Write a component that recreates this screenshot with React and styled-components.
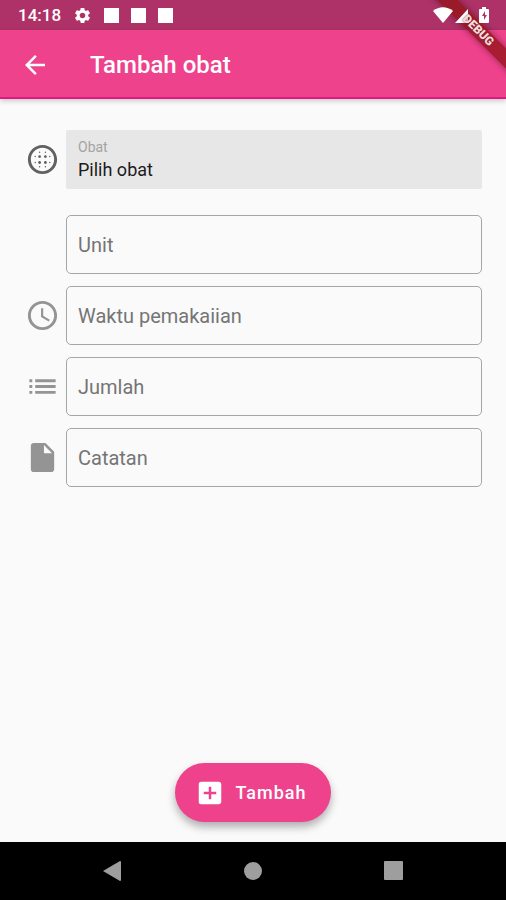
import styled, { createGlobalStyle } from 'styled-components';
import { useState } from 'react';
import {
  MdAccessTime,
  MdAddBox,
  MdArrowBack,
  MdBlurCircular,
  MdInsertDriveFile,
  MdList,
  MdSettings,
} from 'react-icons/md';

const fields = [
  { name: 'unit', label: 'Unit', icon: null },
  { name: 'waktu', label: 'Waktu pemakaiian', icon: MdAccessTime },
  { name: 'jumlah', label: 'Jumlah', icon: MdList },
  { name: 'catatan', label: 'Catatan', icon: MdInsertDriveFile },
];

const StatusBar = () => (
  <StatusContainer>
    <StatusGroup>
      <Clock>14:18</Clock>
      <MdSettings size={19} />
      <Notification />
      <Notification />
      <Notification />
    </StatusGroup>
    <StatusIcons>
      <svg width="20" height="16" viewBox="0 0 20 16">
        <path d="M0 4C6-1 14-1 20 4L10 16Z" fill="#fff" />
      </svg>
      <svg width="16" height="16" viewBox="0 0 16 16">
        <path d="M0 16L13 2V16Z" fill="#fff" />
      </svg>
      <svg width="10" height="16" viewBox="0 0 10 16">
        <path d="M3 0H7V2H9Q10 2 10 3V15Q10 16 9 16H1Q0 16 0 15V3Q0 2 1 2H3Z" fill="#fff" />
        <path d="M6 4L3 9H5V13L8 8H6Z" fill="#ae3267" />
      </svg>
    </StatusIcons>
  </StatusContainer>
);

const Field = ({ name, label, icon: Icon }) => {
  const [value, setValue] = useState('');

  return (
    <Row>
      <IconSlot>{Icon && <Icon size={35} />}</IconSlot>
      <Outlined>
        {value === '' && <FieldLabel htmlFor={name}>{label}</FieldLabel>}
        <FieldInput
          id={name}
          aria-label={label}
          value={value}
          onChange={e => setValue(e.target.value)}
        />
      </Outlined>
    </Row>
  );
};

const App = () => {
  return (
    <Page>
      <GlobalStyle />
      <StatusBar />
      <AppBar>
        <BackButton aria-label="Kembali">
          <MdArrowBack size={30} />
        </BackButton>
        <Title>Tambah obat</Title>
      </AppBar>
      <Form>
        <Row $last>
          <IconSlot $dark><MdBlurCircular size={35} /></IconSlot>
          <Filled>
            <SmallLabel htmlFor="obat">Obat</SmallLabel>
            <PickInput id="obat" value="Pilih obat" readOnly />
          </Filled>
        </Row>
        {fields.map(field => <Field key={field.name} {...field} />)}
      </Form>
      <Footer>
        <AddButton>
          <MdAddBox size={30} />
          Tambah
        </AddButton>
      </Footer>
      <NavBar>
        <NavButton aria-label="Back">
          <svg width="20" height="20" viewBox="0 0 20 20">
            <path d="M1 10L18 0Q19 0 19 1V19Q19 20 18 20Z" fill="#9e9e9e" />
          </svg>
        </NavButton>
        <NavButton aria-label="Home">
          <svg width="20" height="20" viewBox="0 0 20 20">
            <circle cx="10" cy="10" r="9" fill="#9e9e9e" />
          </svg>
        </NavButton>
        <NavButton aria-label="Recent">
          <svg width="20" height="20" viewBox="0 0 20 20">
            <rect x="0" y="0" width="19" height="19" rx="1" fill="#9e9e9e" />
          </svg>
        </NavButton>
      </NavBar>
      <Corner>
        <Ribbon />
        <RibbonText>DEBUG</RibbonText>
      </Corner>
    </Page>
  );
};

export default App;

const GlobalStyle = createGlobalStyle`
  * {
    box-sizing: border-box;
  }
  body {
    margin: 0;
    background: #fafafa;
    font-family: Roboto, sans-serif;
  }
  button, input {
    font-family: inherit;
  }
  svg {
    display: block;
    flex-shrink: 0;
  }
`;
const Page = styled.div`
  position: relative;
  display: flex;
  flex-direction: column;
  min-height: 100vh;
`;
const StatusContainer = styled.div`
  display: flex;
  justify-content: space-between;
  align-items: center;
  height: 30px;
  padding: 0 17px 0 18px;
  background: #ae3267;
  color: #fff;
`;
const StatusGroup = styled.div`
  display: flex;
  align-items: center;
  gap: 12px;
`;
/* system icons stay above the ribbon band, but below its text */
const StatusIcons = styled.div`
  position: relative;
  z-index: 1;
  display: flex;
  align-items: center;
  gap: 2px;
  svg:last-child {
    margin-left: 6px;
  }
`;
const Clock = styled.span`
  font-size: 17px;
  font-weight: 500;
  line-height: 20px;
`;
const Notification = styled.span`
  width: 15px;
  height: 15px;
  background: #fff;
`;
const AppBar = styled.header`
  display: flex;
  align-items: center;
  gap: 40px;
  height: 69px;
  padding: 2px 20px 0;
  background: #ee428c;
  border-bottom: 2px solid #e01882;
  box-shadow: 0 2px 5px rgba(0, 0, 0, 0.2);
  color: #fff;
`;
const BackButton = styled.button`
  padding: 0;
  border: none;
  background: none;
  color: inherit;
`;
const Title = styled.h1`
  margin: 0;
  font-size: 24px;
  font-weight: 500;
  line-height: 32px;
`;
const Form = styled.form`
  flex: 1;
  padding: 31px 24px 0 25px;
`;
const Row = styled.div`
  display: flex;
  align-items: center;
  gap: 6px;
  margin-bottom: ${({ $last }) => ($last ? '26px' : '12px')};
`;
const IconSlot = styled.div`
  width: 35px;
  flex-shrink: 0;
  color: ${({ $dark }) => ($dark ? '#616161' : '#949494')};
`;
const Filled = styled.div`
  flex: 1;
  height: 59px;
  padding: 8px 12px;
  border-radius: 2px;
  background: #e7e7e7;
`;
const SmallLabel = styled.label`
  display: block;
  font-size: 14px;
  line-height: 18px;
  color: #a3a3a3;
`;
const PickInput = styled.input`
  display: block;
  width: 100%;
  height: 26px;
  padding: 0;
  border: none;
  background: none;
  font-size: 18px;
  color: #1c1c1c;
  outline: none;
`;
const Outlined = styled.div`
  flex: 1;
  display: grid;
  align-items: center;
  height: 59px;
  border: 1px solid #a6a6a6;
  border-radius: 5px;
`;
const FieldLabel = styled.label`
  grid-area: 1 / 1;
  padding: 0 11px;
  font-size: 20px;
  line-height: 24px;
  color: #757575;
  pointer-events: none;
`;
const FieldInput = styled.input`
  grid-area: 1 / 1;
  width: 100%;
  height: 100%;
  padding: 0 11px;
  border: none;
  background: none;
  font-size: 20px;
  outline: none;
`;
const Footer = styled.div`
  display: flex;
  justify-content: center;
  padding-bottom: 20px;
`;
const AddButton = styled.button`
  display: flex;
  align-items: center;
  gap: 10px;
  height: 59px;
  padding: 0 24px 0 20px;
  border: none;
  border-radius: 30px;
  background: #ee428c;
  box-shadow: 0 5px 9px rgba(0, 0, 0, 0.3);
  color: #fff;
  font-size: 18px;
  font-weight: 500;
  letter-spacing: 1px;
`;
const NavBar = styled.nav`
  display: grid;
  grid-template-columns: repeat(3, 1fr);
  height: 58px;
  padding: 0 42px;
  background: #000;
`;
const NavButton = styled.button`
  display: flex;
  justify-content: center;
  align-items: center;
  padding: 0;
  border: none;
  background: none;
`;
const Corner = styled.div`
  position: absolute;
  top: 0;
  right: 0;
  width: 110px;
  height: 110px;
  overflow: hidden;
  pointer-events: none;
`;
const Ribbon = styled.div`
  position: absolute;
  top: 23px;
  left: 12px;
  width: 140px;
  height: 15px;
  background: rgba(150, 20, 28, 0.8);
  box-shadow: 0 0 6px rgba(0, 0, 0, 0.4);
  transform: rotate(45deg);
`;
const RibbonText = styled(Ribbon)`
  z-index: 2;
  background: none;
  box-shadow: none;
  color: #f5dcdc;
  font-size: 12px;
  font-weight: 900;
  line-height: 15px;
  text-align: center;
  text-shadow: 0 0 2px #7a2030;
`;
